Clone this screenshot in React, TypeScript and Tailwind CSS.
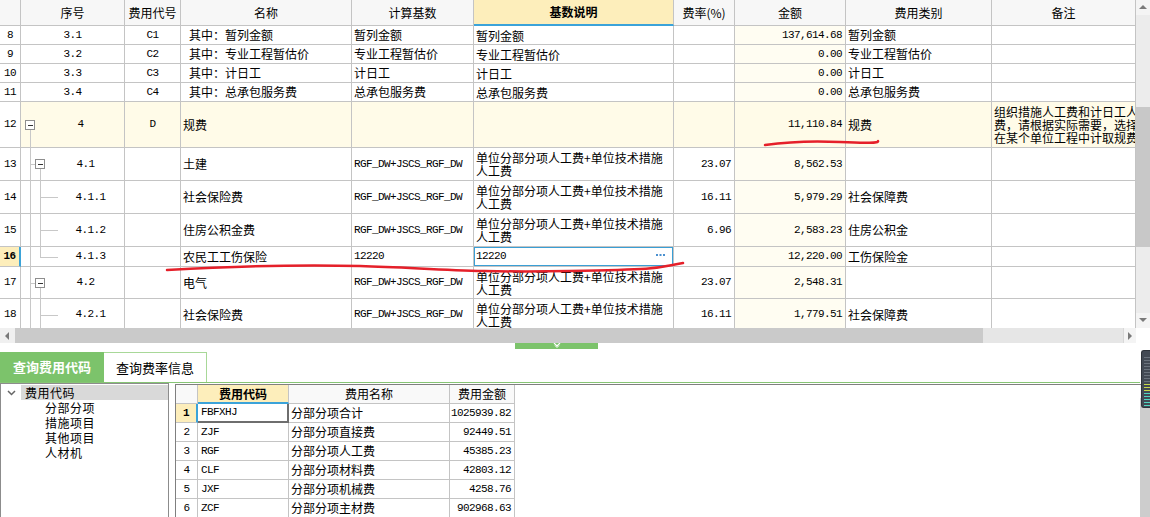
import React from 'react';

type Row = {
  no: string;
  seq: string;
  code?: string;
  name: string;
  indent?: boolean;
  base?: string;
  desc?: string[];
  rate?: string;
  amt: string;
  cat?: string;
  note?: string[];
  h: string;
  px: number;
  tree?: 'root' | 'parent' | 'child' | 'last';
  hl?: boolean;
  active?: boolean;
};

const MONO = "font-['Liberation_Mono',monospace] text-[11px] tracking-[-0.6px]";
const LINE = 'border-r border-b border-[#c4c4c4]';
const DESC = ['单位分部分项人工费+单位技术措施', '人工费'];
const BASE = 'RGF_DW+JSCS_RGF_DW';

const rows: Row[] = [
  { no: '8', seq: '3.1', code: 'C1', name: '其中：暂列金额', indent: true, base: '暂列金额', desc: ['暂列金额'], amt: '137,614.68', cat: '暂列金额', h: 'h-[19px]', px: 19 },
  { no: '9', seq: '3.2', code: 'C2', name: '其中：专业工程暂估价', indent: true, base: '专业工程暂估价', desc: ['专业工程暂估价'], amt: '0.00', cat: '专业工程暂估价', h: 'h-[19px]', px: 19 },
  { no: '10', seq: '3.3', code: 'C3', name: '其中：计日工', indent: true, base: '计日工', desc: ['计日工'], amt: '0.00', cat: '计日工', h: 'h-[19px]', px: 19 },
  { no: '11', seq: '3.4', code: 'C4', name: '其中：总承包服务费', indent: true, base: '总承包服务费', desc: ['总承包服务费'], amt: '0.00', cat: '总承包服务费', h: 'h-[19px]', px: 19 },
  {
    no: '12', seq: '4', code: 'D', name: '规费', amt: '11,110.84', cat: '规费', h: 'h-[46px]', px: 46, tree: 'root', hl: true,
    note: ['组织措施人工费和计日工人工', '费，请根据实际需要，选择', '在某个单位工程中计取规费'],
  },
  { no: '13', seq: '4.1', name: '土建', base: BASE, desc: DESC, rate: '23.07', amt: '8,562.53', h: 'h-[33px]', px: 33, tree: 'parent' },
  { no: '14', seq: '4.1.1', name: '社会保险费', base: BASE, desc: DESC, rate: '16.11', amt: '5,979.29', cat: '社会保障费', h: 'h-[33px]', px: 33, tree: 'child' },
  { no: '15', seq: '4.1.2', name: '住房公积金费', base: BASE, desc: DESC, rate: '6.96', amt: '2,583.23', cat: '住房公积金', h: 'h-[33px]', px: 33, tree: 'child' },
  { no: '16', seq: '4.1.3', name: '农民工工伤保险', base: '12220', desc: ['12220'], amt: '12,220.00', cat: '工伤保险金', h: 'h-[20px]', px: 20, tree: 'last', active: true },
  { no: '17', seq: '4.2', name: '电气', base: BASE, desc: DESC, rate: '23.07', amt: '2,548.31', h: 'h-[32px]', px: 32, tree: 'parent' },
  { no: '18', seq: '4.2.1', name: '社会保险费', base: BASE, desc: DESC, rate: '16.11', amt: '1,779.51', cat: '社会保障费', h: 'h-[32px]', px: 32, tree: 'child' },
];

const codes = [
  ['1', 'FBFXHJ', '分部分项合计', '1025939.82'],
  ['2', 'ZJF', '分部分项直接费', '92449.51'],
  ['3', 'RGF', '分部分项人工费', '45385.23'],
  ['4', 'CLF', '分部分项材料费', '42803.12'],
  ['5', 'JXF', '分部分项机械费', '4258.76'],
  ['6', 'ZCF', '分部分项主材费', '902968.63'],
];

function TreeLines({ kind, h }: { kind: NonNullable<Row['tree']>; h: number }) {
  const c = Math.floor(h / 2);
  const ln = '#c8c8c8';
  const box = (x: number) => (
    <g>
      <rect x={x + 0.5} y={c - 4.5} width={9} height={9} fill="#fff" stroke="#8e8e8e" />
      <line x1={x + 3} x2={x + 8} y1={c + 0.5} y2={c + 0.5} stroke="#333" />
    </g>
  );
  return (
    <svg className="absolute left-0 top-0" width={40} height={h}>
      {kind === 'root' && (
        <>
          <line x1={9.5} x2={9.5} y1={c + 5} y2={h} stroke={ln} />
          {box(4)}
        </>
      )}
      {kind === 'parent' && (
        <>
          <line x1={9.5} x2={9.5} y1={0} y2={h} stroke={ln} />
          <line x1={9.5} x2={14} y1={c + 0.5} y2={c + 0.5} stroke={ln} />
          <line x1={19.5} x2={19.5} y1={c + 5} y2={h} stroke={ln} />
          {box(14)}
        </>
      )}
      {kind === 'child' && (
        <>
          <line x1={9.5} x2={9.5} y1={0} y2={h} stroke={ln} />
          <line x1={19.5} x2={19.5} y1={0} y2={h} stroke={ln} />
          <line x1={19.5} x2={37} y1={c + 0.5} y2={c + 0.5} stroke={ln} />
        </>
      )}
      {kind === 'last' && (
        <>
          <line x1={9.5} x2={9.5} y1={0} y2={h} stroke={ln} />
          <line x1={19.5} x2={19.5} y1={0} y2={c + 1} stroke={ln} />
          <line x1={19.5} x2={37} y1={c + 0.5} y2={c + 0.5} stroke={ln} />
        </>
      )}
    </svg>
  );
}

function seqPad(t?: Row['tree']) {
  if (t === 'root') return 'pl-[16px]';
  if (t === 'parent') return 'pl-[26px]';
  if (t === 'child' || t === 'last') return 'pl-[36px]';
  return '';
}

function TableRow({ r }: { r: Row }) {
  const bg = r.hl ? 'bg-[#fffbe8]' : 'bg-white';
  return (
    <div className={`flex ${r.h}`}>
      <div
        className={`w-[21px] shrink-0 flex items-center justify-center ${LINE} ${MONO} ${
          r.active ? 'bg-[#fdeebb] font-bold border-r-2 border-r-[#3ba3d9]' : 'bg-white'
        }`}
      >
        {r.no}
      </div>
      <div className={`relative w-[104px] shrink-0 flex items-center justify-center ${LINE} ${bg} ${MONO} ${seqPad(r.tree)}`}>
        {r.tree && <TreeLines kind={r.tree} h={r.px} />}
        <span className="relative">{r.seq}</span>
      </div>
      <div className={`w-[56px] shrink-0 flex items-center justify-center ${LINE} ${bg} ${MONO}`}>{r.code}</div>
      <div className={`w-[171px] shrink-0 flex items-center ${LINE} ${bg} ${r.indent ? 'pl-[8px]' : 'pl-[2px]'}`}>{r.name}</div>
      <div className={`w-[122px] shrink-0 flex items-center pl-[2px] overflow-hidden whitespace-nowrap ${LINE} ${bg} ${r.base && /^[A-Z0-9]/.test(r.base) ? MONO : ''}`}>
        {r.base}
      </div>
      <div
        className={`w-[200px] shrink-0 flex items-center justify-between pl-[2px] pr-[8px] ${LINE} ${bg} ${
          r.active ? 'ring-1 ring-inset ring-[#3a9fd5]' : ''
        }`}
      >
        <div className="flex flex-col leading-[13px]">
          {r.desc?.map((d) => (
            <span key={d} className={`whitespace-nowrap ${/^[0-9]/.test(d) ? MONO : ''}`}>
              {d}
            </span>
          ))}
        </div>
        {r.active && (
          <svg width={9} height={3} viewBox="0 0 9 3" className="mb-[3px]">
            <rect x={0} y={0} width={2} height={2} fill="#4a90d0" />
            <rect x={3.5} y={0} width={2} height={2} fill="#4a90d0" />
            <rect x={7} y={0} width={2} height={2} fill="#4a90d0" />
          </svg>
        )}
      </div>
      <div className={`w-[61px] shrink-0 flex items-center justify-end pr-[3px] ${LINE} ${bg} ${MONO}`}>{r.rate}</div>
      <div className={`w-[111px] shrink-0 flex items-center justify-end pr-[3px] ${LINE} ${r.hl ? 'bg-[#fffbe8]' : 'bg-[#fffdf2]'} ${MONO}`}>
        {r.amt}
      </div>
      <div className={`w-[146px] shrink-0 flex items-center pl-[2px] ${LINE} ${bg}`}>{r.cat}</div>
      <div className={`w-[144px] shrink-0 flex items-center pl-[2px] overflow-hidden ${LINE} ${bg}`}>
        {r.note && (
          <div className="flex flex-col leading-[13px] whitespace-nowrap">
            {r.note.map((n) => (
              <span key={n}>{n}</span>
            ))}
          </div>
        )}
      </div>
    </div>
  );
}

function Arrow({ dir }: { dir: 'up' | 'down' | 'left' | 'right' }) {
  const pts = {
    up: '1,6 5,2 9,6',
    down: '1,2 5,6 9,2',
    left: '6,1 2,5 6,9',
    right: '3,1 7,5 3,9',
  }[dir];
  return (
    <svg width={10} height={10} viewBox="0 0 10 10">
      <polygon points={pts} fill="#7a7a7a" />
    </svg>
  );
}

export default function App() {
  return (
    <div className="relative w-[1150px] h-[517px] overflow-hidden bg-white text-[12px] text-black font-['Noto_Sans_CJK_SC','Microsoft_YaHei',sans-serif]">
      {/* top grid */}
      <div className="flex h-[343px]">
        <div className="w-[1136px] flex flex-col">
          <div className="h-[328px] overflow-hidden">
            <div className="flex h-[26px] bg-[#f7f7f7]">
              <div className={`w-[21px] shrink-0 ${LINE}`} />
              <div className={`w-[104px] shrink-0 flex items-center justify-center ${LINE}`}>序号</div>
              <div className={`w-[56px] shrink-0 flex items-center justify-center ${LINE}`}>费用代号</div>
              <div className={`w-[171px] shrink-0 flex items-center justify-center ${LINE}`}>名称</div>
              <div className={`w-[122px] shrink-0 flex items-center justify-center ${LINE}`}>计算基数</div>
              <div className="w-[200px] shrink-0 flex items-center justify-center font-bold bg-[#fdeebb] border-r border-[#c4c4c4] border-b-2 border-b-[#3ba3d9]">
                基数说明
              </div>
              <div className={`w-[61px] shrink-0 flex items-center justify-center ${LINE}`}>费率(%)</div>
              <div className={`w-[111px] shrink-0 flex items-center justify-center ${LINE}`}>金额</div>
              <div className={`w-[146px] shrink-0 flex items-center justify-center ${LINE}`}>费用类别</div>
              <div className={`w-[144px] shrink-0 flex items-center justify-center ${LINE}`}>备注</div>
            </div>
            {rows.map((r) => (
              <TableRow key={r.no} r={r} />
            ))}
          </div>
          <div className="h-[15px] flex bg-[#e6e6e6]">
            <div className="w-[15px] flex items-center justify-center bg-[#f0f0f0]">
              <Arrow dir="left" />
            </div>
            <div className="w-[968px] bg-[#cacaca]" />
            <div className="flex-1" />
            <div className="w-[13px] flex items-center justify-center bg-[#f4f4f4] border-l border-[#d8d8d8]">
              <Arrow dir="right" />
            </div>
          </div>
        </div>
        <div className="w-[14px] flex flex-col">
          <div className="h-[328px] flex flex-col bg-[#ececec]">
            <div className="h-[15px] flex items-center justify-center bg-[#f4f4f4]">
              <Arrow dir="up" />
            </div>
            <div className="h-[92px]" />
            <div className="h-[140px] bg-[#c8c8c8]" />
            <div className="flex-1" />
            <div className="h-[15px] flex items-center justify-center bg-[#f4f4f4]">
              <Arrow dir="down" />
            </div>
          </div>
          <div className="flex-1 bg-white" />
        </div>
      </div>

      {/* splitter handle */}
      <div className="h-[6px] flex">
        <div className="ml-[515px] w-[83px] bg-[#7cc36b] flex justify-center">
          <svg width={10} height={6} viewBox="0 0 10 6">
            <polyline points="2,0 5,3 8,0" fill="none" stroke="#fff" strokeWidth={1.2} />
            <polyline points="3,2.5 5,4.5 7,2.5" fill="none" stroke="#fff" strokeWidth={1} />
          </svg>
        </div>
      </div>
      <div className="h-[3px]" />

      {/* tabs */}
      <div className="flex h-[30px] text-[13px]">
        <div className="w-[104px] flex items-center justify-center bg-[#7cc36b] text-white font-bold">查询费用代码</div>
        <div className="w-[103px] flex items-center justify-center border-t border-r border-[#a8d898]">查询费率信息</div>
      </div>
      <div className="h-[1px] w-[1140px] bg-[#86c574]" />

      {/* bottom panels */}
      <div className="flex h-[134px]">
        <div className="w-[169px] shrink-0 border border-b-0 border-[#8c8c8c] pt-[1px] tracking-[0.5px]">
          <div className="flex h-[15px] items-center">
            <div className="w-[20px] flex justify-center">
              <svg width={9} height={6} viewBox="0 0 9 6">
                <polyline points="1,1 4.5,4.5 8,1" fill="none" stroke="#666" strokeWidth={1.5} />
              </svg>
            </div>
            <div className="flex-1 h-full flex items-center pl-[4px] bg-[#d9d9d9]">费用代码</div>
          </div>
          {['分部分项', '措施项目', '其他项目', '人材机'].map((t) => (
            <div key={t} className="h-[15px] flex items-center pl-[44px]">
              {t}
            </div>
          ))}
        </div>
        <div className="ml-[6px] mt-[1px] flex-1 flex border-l border-t border-[#7f7f7f]">
          <div className="flex flex-col">
            <div className="flex h-[19px] bg-[#f9f9f9]">
              <div className={`w-[22px] ${LINE}`} />
              <div className="w-[91px] flex items-center justify-center font-bold bg-[#fdeebb] border-r border-[#c4c4c4] border-b-2 border-b-[#3ba3d9]">
                费用代码
              </div>
              <div className={`w-[161px] flex items-center justify-center ${LINE}`}>费用名称</div>
              <div className={`w-[65px] flex items-center justify-center ${LINE}`}>费用金额</div>
            </div>
            {codes.map(([n, c, name, v], i) => (
              <div key={n} className="flex h-[19px]">
                <div
                  className={`w-[22px] flex items-center justify-center ${MONO} ${
                    i === 0 ? 'bg-[#fdeebb] font-bold border-b border-[#c4c4c4] border-r-2 border-r-[#3ba3d9]' : `${LINE}`
                  }`}
                >
                  {n}
                </div>
                <div
                  className={`w-[91px] flex items-center pl-[3px] ${MONO} ${
                    i === 0 ? 'border-r-2 border-b-2 border-[#6e6e6e]' : LINE
                  }`}
                >
                  {c}
                </div>
                <div className={`w-[161px] flex items-center pl-[2px] ${LINE}`}>{name}</div>
                <div className={`w-[65px] flex items-center justify-end pr-[3px] ${LINE} ${MONO}`}>{v}</div>
              </div>
            ))}
          </div>
          <div className="flex-1" />
          <div className="w-[10px] flex flex-col bg-[#e4e4e4]">
            <div className="h-[13px] flex items-center justify-center bg-[#f6f6f6]">
              <svg width={8} height={6} viewBox="0 0 8 6">
                <polygon points="0,5 4,1 8,5" fill="#7a7a7a" />
              </svg>
            </div>
            <div className="flex-1 bg-[#cdcdcd]" />
          </div>
        </div>
      </div>

      {/* floating meter widget */}
      <div className="absolute right-0 top-[350px] w-[9px] h-[58px] rounded-l-[3px] bg-[#434a54] border border-r-0 border-[#2e333a]">
        <svg width={9} height={56} viewBox="0 0 9 56">
          {Array.from({ length: 17 }).map((_, i) => (
            <line
              key={i}
              x1={2}
              x2={8}
              y1={6 + i * 3 + 0.5}
              y2={6 + i * 3 + 0.5}
              stroke={i < 9 ? '#6b737d' : i < 12 ? '#c8d94a' : '#4fd6c0'}
            />
          ))}
        </svg>
      </div>

      {/* red annotation strokes */}
      <svg className="absolute inset-0 pointer-events-none" width={1150} height={517}>
        <path d="M765 145 Q 800 140 840 142 T 878 141" fill="none" stroke="#e5202a" strokeWidth={2.5} strokeLinecap="round" />
        <path
          d="M167 270 C 220 267, 290 264, 360 266 S 470 273, 570 271 S 655 268, 683 263"
          fill="none"
          stroke="#e5202a"
          strokeWidth={2.5}
          strokeLinecap="round"
        />
      </svg>
    </div>
  );
}
